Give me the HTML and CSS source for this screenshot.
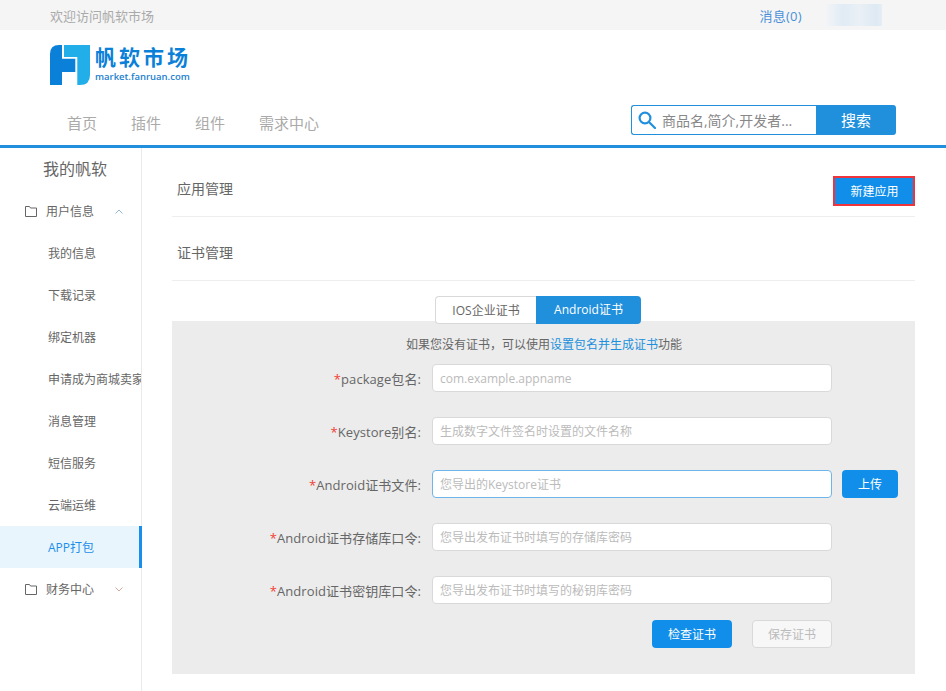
FILE: index.html
```html
<!DOCTYPE html>
<html lang="zh">
<head>
<meta charset="utf-8">
<title>帆软市场</title>
<link rel="stylesheet" href="styles.css">
</head>
<body>
<div class="topbar">
  <span class="welcome">欢迎访问帆软市场</span>
  <span class="msg">消息(0)</span>
  <span class="user-blur"></span>
</div>
<header class="header">
  <div class="logo">
    <svg class="logo-mark" width="40" height="40" viewBox="0 0 40 40">
      <path d="M12 0H9Q0 0 0 9V40H12V27H25.300V13.700H12Z" fill="#0a80d8"/>
      <path d="M14 0H40V30Q40 40 30 40H27.300V12H14Z" fill="#22aee8"/>
    </svg>
    <div class="logo-text">
      <div class="logo-cn">帆软市场</div>
      <div class="logo-en">market.fanruan.com</div>
    </div>
  </div>
  <div class="navrow">
    <nav class="nav">
      <a>首页</a><a>插件</a><a>组件</a><a>需求中心</a>
    </nav>
    <div class="search">
      <div class="search-box">
        <svg width="18" height="18" viewBox="0 0 18 18" fill="none" stroke="#2090dc" stroke-width="2.2"><circle cx="7" cy="7" r="5.4"/><path d="M11 11L17 17" stroke-linecap="round"/></svg>
        <span class="search-ph">商品名,简介,开发者...</span>
      </div>
      <div class="search-btn">搜索</div>
    </div>
  </div>
</header>
<div class="main">
  <aside class="side">
    <div class="side-title">我的帆软</div>
    <div class="side-group">
      <svg class="folder" width="12" height="11" viewBox="0 0 12 11" fill="none" stroke="#666"><path d="M.5 10.500V.5H4.500L5.500 2H11.500V10.500Z"/></svg>
      <span class="group-name">用户信息</span>
      <svg class="chev" width="8" height="5" viewBox="0 0 8 5" fill="none" stroke="#8fb4d0"><path d="M.5 4.500L4 1L7.500 4.500"/></svg>
    </div>
    <div class="side-item">我的信息</div>
    <div class="side-item">下载记录</div>
    <div class="side-item">绑定机器</div>
    <div class="side-item">申请成为商城卖家</div>
    <div class="side-item">消息管理</div>
    <div class="side-item">短信服务</div>
    <div class="side-item">云端运维</div>
    <div class="side-item active">APP打包</div>
    <div class="side-group">
      <svg class="folder" width="12" height="11" viewBox="0 0 12 11" fill="none" stroke="#666"><path d="M.5 10.500V.5H4.500L5.500 2H11.500V10.500Z"/></svg>
      <span class="group-name">财务中心</span>
      <svg class="chev" width="8" height="5" viewBox="0 0 8 5" fill="none" stroke="#d0a89f"><path d="M.5.5L4 4L7.500.5"/></svg>
    </div>
  </aside>
  <main class="content">
    <div class="section first">
      <span class="section-title">应用管理</span>
      <button class="new-btn">新建应用</button>
    </div>
    <div class="section">
      <span class="section-title">证书管理</span>
    </div>
    <div class="tabs">
      <div class="tab">IOS企业证书</div>
      <div class="tab on">Android证书</div>
    </div>
    <div class="panel">
      <p class="hint">如果您没有证书，可以使用<a>设置包名并生成证书</a>功能</p>
      <div class="row"><label class="lbl"><i>*</i>package包名:</label><div class="inp">com.example.appname</div></div>
      <div class="row"><label class="lbl"><i>*</i>Keystore别名:</label><div class="inp">生成数字文件签名时设置的文件名称</div></div>
      <div class="row"><label class="lbl"><i>*</i>Android证书文件:</label><div class="inp focus">您导出的Keystore证书</div><button class="btn upload">上传</button></div>
      <div class="row"><label class="lbl"><i>*</i>Android证书存储库口令:</label><div class="inp">您导出发布证书时填写的存储库密码</div></div>
      <div class="row"><label class="lbl"><i>*</i>Android证书密钥库口令:</label><div class="inp">您导出发布证书时填写的秘钥库密码</div></div>
      <div class="actions">
        <button class="btn check">检查证书</button>
        <button class="btn save">保存证书</button>
      </div>
    </div>
  </main>
</div>
</body>
</html>
```

FILE: styles.css
```css
* { box-sizing: border-box; }
html, body { margin: 0; padding: 0; }
body {
  width: 946px;
  height: 691px;
  overflow: hidden;
  background: #fff;
  font-family: "Open Sans", "Noto Sans CJK SC", sans-serif;
  color: #666;
}
button { font-family: inherit; border: 0; padding: 0; }

.topbar {
  height: 30px;
  background: #f5f5f5;
  display: flex;
  align-items: center;
  padding-left: 50px;
  font-size: 13px;
  color: #aaa;
}
.welcome { flex: 1; }
.msg { color: #4a90d8; font-size: 13px; letter-spacing: .3px; margin-right: 24px; }
.user-blur {
  width: 56px;
  height: 22px;
  margin-right: 64px;
  background: linear-gradient(90deg, #f3f5f7, #e0ebf5 30%, #eaf0f5 60%, #dde9f4 90%, #e6eef5);
}

.header {
  height: 118px;
  border-bottom: 3px solid #2090dc;
  padding-top: 15px;
}
.logo {
  display: flex;
  margin-left: 50px;
  height: 40px;
  gap: 5px;
}
.logo-mark { display: block; }
.logo-cn {
  font-size: 21px;
  line-height: 25px;
  font-weight: 700;
  letter-spacing: 3px;
  color: #0a80d8;
  white-space: nowrap;
}
.logo-en {
  font-size: 9.500px;
  line-height: 14px;
  font-weight: 600;
  color: #1a80d0;
  white-space: nowrap;
}
.navrow {
  display: flex;
  justify-content: space-between;
  align-items: flex-start;
  margin-top: 20px;
  padding: 0 50px 0 67px;
}
.nav { display: flex; gap: 34px; padding-top: 5px; }
.nav a { font-size: 15px; line-height: 26px; color: #aaa; }
.search { display: flex; width: 265px; height: 30px; }
.search-box {
  width: 185px;
  border: 1px solid #2090dc;
  border-right: 0;
  border-radius: 3px 0 0 3px;
  display: flex;
  align-items: center;
  padding-left: 6px;
  gap: 6px;
}
.search-ph { font-size: 14px; color: #888; white-space: nowrap; }
.search-btn {
  flex: 1;
  background: #2090dc;
  color: #fff;
  font-size: 15px;
  line-height: 30px;
  text-align: center;
  border-radius: 0 3px 3px 0;
}

.main { display: flex; height: 543px; }
.side {
  width: 142px;
  flex: none;
  border-right: 1px solid #eaeaea;
}
.side-title {
  height: 42px;
  line-height: 42px;
  font-size: 16px;
  padding-left: 43px;
  color: #666;
  white-space: nowrap;
}
.side-group {
  height: 42px;
  display: flex;
  align-items: center;
  padding-left: 25px;
  font-size: 12px;
  color: #666;
}
.group-name { margin-left: 9px; }
.chev { margin-left: 21px; }
.side-item {
  width: 141px;
  height: 42px;
  line-height: 44px;
  padding-left: 48px;
  font-size: 12px;
  color: #666;
  white-space: nowrap;
  overflow: hidden;
}
.side-item.active {
  width: 142px;
  background: #e9f5fd;
  color: #1a8eea;
  border-right: 3px solid #1a8eea;
}

.content { flex: 1; padding: 0 31px 0 30px; }
.section {
  height: 64px;
  border-bottom: 1px solid #eee;
  display: flex;
  align-items: center;
  justify-content: space-between;
  padding-left: 5px;
  padding-top: 7px;
}
.section.first { height: 69px; padding-top: 12px; }
.section-title { font-size: 14px; color: #666; }
.new-btn {
  width: 82px;
  height: 30px;
  background: #108ee9;
  border: 2px solid #f0343c;
  color: #fff;
  font-size: 12px;
  margin-top: 5px;
  padding: 1px 0 0 1px;
}

.tabs {
  display: flex;
  justify-content: center;
  margin-top: 15px;
  height: 28px;
  position: relative;
  z-index: 1;
  padding-right: 11px;
}
.tab {
  width: 101px;
  height: 28px;
  border: 1px solid #d9d9d9;
  border-right: 0;
  border-radius: 4px 0 0 4px;
  background: #fff;
  font-size: 12px;
  line-height: 27px;
  text-align: center;
  color: #666;
}
.tab.on {
  width: 105px;
  background: #2090dc;
  border: 0;
  border-radius: 0 4px 4px 0;
  color: #fff;
}

.panel {
  background: #ececec;
  height: 353px;
  margin-top: -3px;
  padding-top: 15px;
}
.hint {
  margin: 0 0 10px;
  font-size: 12px;
  line-height: 18px;
  text-align: center;
  color: #666;
  padding-left: 1px;
}
.hint a { color: #2090dc; }
.row {
  display: flex;
  align-items: center;
  height: 28px;
  margin-bottom: 25px;
}
.lbl {
  width: 249px;
  text-align: right;
  font-size: 13px;
  letter-spacing: .07px;
  color: #666;
  white-space: nowrap;
}
.lbl i { font-style: normal; color: #f04134; }
.inp {
  margin-left: 11px;
  width: 400px;
  height: 28px;
  background: #fff;
  border: 1px solid #d9d9d9;
  border-radius: 4px;
  padding-left: 7px;
  font-size: 12px;
  line-height: 28px;
  color: #bbb;
}
.inp.focus { border-color: #70b5ea; }
.btn { border-radius: 4px; font-size: 12px; height: 28px; }
.upload { margin-left: 10px; width: 56px; background: #108ee9; color: #fff; }
.actions {
  display: flex;
  margin-top: -9px;
  padding-left: 480px;
  gap: 20px;
}
.check { width: 80px; background: #108ee9; color: #fff; }
.save { width: 80px; background: #f7f7f7; border: 1px solid #d9d9d9; color: #bbb; }
```
